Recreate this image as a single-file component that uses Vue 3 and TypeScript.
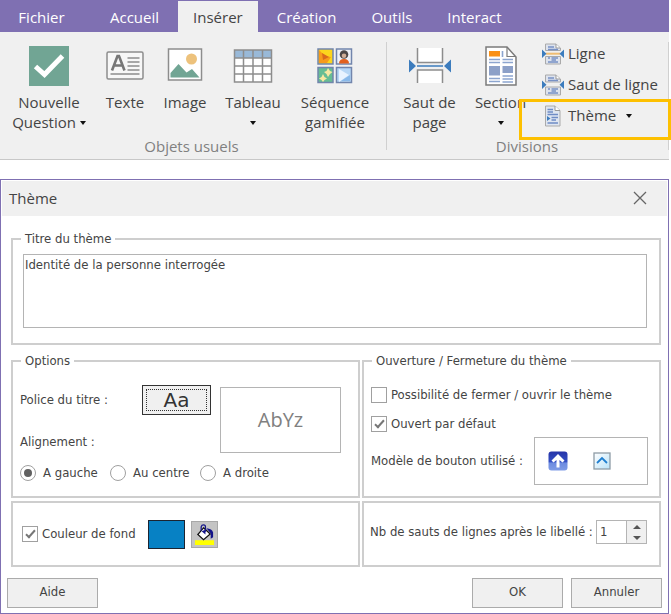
<script setup lang="ts">
import { ref } from 'vue'

type Align = 'left' | 'center' | 'right'

const tabs: string[] = ['Fichier', 'Accueil', 'Insérer', 'Création', 'Outils', 'Interact']
const activeTab = ref<string>('Insérer')

const alignments: { value: Align; label: string }[] = [
  { value: 'left', label: 'A gauche' },
  { value: 'center', label: 'Au centre' },
  { value: 'right', label: 'A droite' },
]

const title = ref<string>('Identité de la personne interrogée')
const align = ref<Align>('left')
const closable = ref<boolean>(false)
const openByDefault = ref<boolean>(true)
const useBackground = ref<boolean>(true)
const lineBreaks = ref<number>(1)

function step(delta: number): void {
  lineBreaks.value = Math.max(0, Number(lineBreaks.value) + delta)
}
</script>

<template>
  <div class="page">
    <header class="ribbon">
      <nav class="tabs">
        <button
          v-for="tab in tabs"
          :key="tab"
          type="button"
          class="tab"
          :class="{ active: tab === activeTab }"
          @click="activeTab = tab"
        >{{ tab }}</button>
      </nav>

      <div class="groups">
        <section class="group objects">
          <div class="tools">
            <button type="button" class="tool">
              <svg class="tool-icon" width="40" height="40" viewBox="0 0 40 40">
                <rect x="0" y="0" width="40" height="40" fill="#71a594" />
                <path d="M6.500 20.500L15.500 28.500L33.500 10" fill="none" stroke="#fff" stroke-width="5" />
              </svg>
              <span>Nouvelle</span>
              <span>Question <i class="caret"></i></span>
            </button>
            <button type="button" class="tool">
              <svg class="tool-icon" width="38" height="40" viewBox="0 0 38 40">
                <rect x="1" y="6" width="36" height="27" rx="1.500" fill="#f7f7f7" stroke="#8d8d8d" stroke-width="1.500" />
                <path d="M6 24.500L11.500 10H13L18.500 24.500M8 19.500H16.500" fill="none" stroke="#777" stroke-width="2.600" />
                <path d="M21.500 12H33.500M21.500 16H33.500M21.500 20H33.500M21.500 24H33.500M4.500 28H33.500" stroke="#8d8d8d" stroke-width="1.500" />
              </svg>
              <span>Texte</span>
            </button>
            <button type="button" class="tool">
              <svg class="tool-icon" width="36" height="40" viewBox="0 0 36 40">
                <rect x="1.500" y="3" width="33" height="31" fill="#fff" stroke="#8d8d8d" stroke-width="1.500" />
                <circle cx="24.500" cy="13" r="5.500" fill="#edc27c" />
                <path d="M3.500 31.500V27L11.500 18L19.500 26.500L25 23L32.500 31.500Z" fill="#71a594" />
              </svg>
              <span>Image</span>
            </button>
            <button type="button" class="tool">
              <svg class="tool-icon" width="40" height="40" viewBox="0 0 40 40">
                <rect x="1.500" y="4" width="37" height="32" fill="#fff" />
                <rect x="1.500" y="4" width="37" height="8" fill="#99b9d8" />
                <path d="M1.500 4H38.500V36H1.500ZM1.500 12H38.500M1.500 20H38.500M1.500 28H38.500M10.500 4V36M20 4V36M29.500 4V36" fill="none" stroke="#8d8d8d" stroke-width="1.500" />
              </svg>
              <span>Tableau</span>
              <span><i class="caret"></i></span>
            </button>
            <button type="button" class="tool">
              <svg class="tool-icon" width="36" height="40" viewBox="0 0 36 40">
                <rect x="1" y="3" width="15" height="15" fill="#fcd51d" stroke="#7285ac" stroke-width="1.500" />
                <path d="M2 4L8 10L14 11L10 17H2Z" fill="#f79a1c" />
                <path d="M5 7L12 11L6 14Z" fill="#d9691c" />
                <rect x="19.500" y="3" width="15" height="15" fill="#eef2f8" stroke="#7285ac" stroke-width="1.500" />
                <path d="M22 17.500Q22 13 27 13Q32 13 32 17.500Z" fill="#e2601c" />
                <circle cx="27" cy="8.500" r="4.300" fill="#4b4747" />
                <circle cx="27" cy="9.800" r="2.300" fill="#cfae98" />
                <rect x="1" y="21.500" width="15" height="15" fill="#67bd94" stroke="#7285ac" stroke-width="1.500" />
                <path d="M11 22L13 25L15.500 26L13 28L11 31L9.500 28L7 26L9.500 25ZM6 28L7.500 31L10 32.500L7.500 34L6 36L4.500 34L2 32.500L4.500 31Z" fill="#f8e8a2" />
                <rect x="19.500" y="21.500" width="15" height="15" fill="#b7d7f6" stroke="#7285ac" stroke-width="1.500" />
                <path d="M22 23L32 29L22 36Z" fill="#e8f3ff" />
                <path d="M24 35L33 29V35Z" fill="#89b9ea" />
              </svg>
              <span>Séquence</span>
              <span>gamifiée</span>
            </button>
          </div>
          <h2 class="group-name">Objets usuels</h2>
        </section>

        <section class="group divisions">
          <div class="tools">
            <button type="button" class="tool">
              <svg class="tool-icon" width="42" height="40" viewBox="0 0 42 40">
                <path d="M8.500 2V16.500H33.500V2M8.500 37V24H33.500V37" fill="#fff" stroke="#8d8d8d" stroke-width="1.500" />
                <path d="M8 20H34" stroke="#3c7cbd" stroke-width="1.500" />
                <path d="M0 13.500L7 20L0 26.500ZM42 13.500L35 20L42 26.500Z" fill="#3c7cbd" />
              </svg>
              <span>Saut de</span>
              <span>page</span>
            </button>
            <button type="button" class="tool">
              <svg class="tool-icon" width="32" height="40" viewBox="0 0 32 40">
                <path d="M1 1H22L31 11V39H1Z" fill="#fff" stroke="#7b7b7b" stroke-width="1.500" />
                <path d="M22 1V10.500H31" fill="none" stroke="#7b7b7b" stroke-width="1.200" />
                <rect x="4" y="5" width="11" height="5.500" fill="#fa9016" />
                <path d="M17.500 5V11M4 13.500H15M4 16.500H15M17.500 13.500H28M17.500 16.500H28M4 32.500H15M4 35.500H15M17.500 30H28M17.500 33H28M17.500 36H28" stroke="#8ca5cf" stroke-width="1.600" />
                <path d="M4 20H15V29.500H4ZM17.500 20H28V27H17.500Z" fill="#8ca0c8" />
              </svg>
              <span>Section</span>
              <span><i class="caret"></i></span>
            </button>
            <ul class="rows">
              <li>
                <button type="button" class="row-tool">
                  <svg width="22" height="22" viewBox="0 0 22 22">
                    <path d="M3.500 7.500V1H14L18.500 5V7.500ZM3.500 13.500V21H18.500V13.500Z" fill="#dde3ee" stroke="#aaa" stroke-width="1" />
                    <path d="M14 1V5H18" fill="#fff" stroke="#999" />
                    <path d="M6 4H12M6 6.500H16M6 15H8M9.500 15H16M9.500 17H14M6 19H16" stroke="#7791c5" stroke-width="1.500" />
                    <path d="M4 10.700H18" stroke="#f0bd72" stroke-width="2" />
                    <path d="M0 6.500L4.500 10.700L0 15ZM22 6.500L17.500 10.700L22 15Z" fill="#3c7cbd" />
                  </svg>
                  <span>Ligne</span>
                </button>
              </li>
              <li>
                <button type="button" class="row-tool">
                  <svg width="22" height="22" viewBox="0 0 22 22">
                    <path d="M3.500 8V1H14L18.500 5V8ZM3.500 13V21H18.500V13Z" fill="#dde3ee" stroke="#aaa" stroke-width="1" />
                    <path d="M14 1V5H18" fill="#fff" stroke="#999" />
                    <path d="M6 4H12M6 6.500H16M6 15H8M9.500 15H16M9.500 17H14M6 19H16" stroke="#7791c5" stroke-width="1.500" />
                    <path d="M0 6.500L4.500 10.700L0 15ZM22 6.500L17.500 10.700L22 15Z" fill="#3c7cbd" />
                  </svg>
                  <span>Saut de ligne</span>
                </button>
              </li>
              <li class="marked">
                <button type="button" class="row-tool">
                  <svg width="22" height="22" viewBox="0 0 22 22">
                    <path d="M3.500 1H13L18 5.500V21H3.500Z" fill="#dfe6f1" stroke="#aaa" stroke-width="1" />
                    <path d="M13 1V5.500H18" fill="#fff" stroke="#999" />
                    <path d="M5.500 4.500H11M5.500 7H11M5.500 9.500H16M9.500 12.500H16M9.500 15H14M5.500 18H16" stroke="#6f8cc5" stroke-width="1.500" />
                    <path d="M5 11L8.500 13.500L5 16Z" fill="#3c7cbd" />
                  </svg>
                  <span>Thème</span>
                  <i class="caret spaced"></i>
                </button>
                <span class="marker"></span>
              </li>
            </ul>
          </div>
          <h2 class="group-name">Divisions</h2>
        </section>
      </div>
    </header>

    <form class="dialog" @submit.prevent>
      <div class="titlebar">
        <h1>Thème</h1>
        <button type="button" class="close" aria-label="Fermer">
          <svg width="14" height="14" viewBox="0 0 14 14">
            <path d="M1 1L13 13M13 1L1 13" stroke="#666" stroke-width="1.300" />
          </svg>
        </button>
      </div>

      <div class="panels">
        <fieldset class="panel title-panel">
          <legend><label for="theme-title">Titre du thème</label></legend>
          <textarea id="theme-title" v-model="title" spellcheck="false"></textarea>
        </fieldset>

        <fieldset class="panel options">
          <legend>Options</legend>
          <div class="font-row">
            <div class="font-fields">
              <div class="font-field">
                <label for="font-button">Police du titre :</label>
                <button id="font-button" type="button" class="font-button"><span>Aa</span></button>
              </div>
              <span id="align-label">Alignement :</span>
            </div>
            <div class="preview">AbYz</div>
          </div>
          <div class="radios" role="radiogroup" aria-labelledby="align-label">
            <label v-for="a in alignments" :key="a.value" class="radio">
              <input v-model="align" type="radio" name="align" :value="a.value" />
              <span>{{ a.label }}</span>
            </label>
          </div>
        </fieldset>

        <fieldset class="panel opening">
          <legend>Ouverture / Fermeture du thème</legend>
          <label class="check">
            <input v-model="closable" type="checkbox" />
            <span>Possibilité de fermer / ouvrir le thème</span>
          </label>
          <label class="check">
            <input v-model="openByDefault" type="checkbox" />
            <span>Ouvert par défaut</span>
          </label>
          <div class="model">
            <span>Modèle de bouton utilisé :</span>
            <div class="model-box">
              <button type="button" class="glyph" aria-label="Flèche">
                <svg width="20" height="20" viewBox="0 0 20 20">
                  <defs>
                    <linearGradient id="arrow-fill" x1="0" y1="0" x2="0" y2="1">
                      <stop offset="0" stop-color="#2634a8" />
                      <stop offset="0.550" stop-color="#3350c4" />
                      <stop offset="0.600" stop-color="#6d8be0" />
                      <stop offset="1" stop-color="#7f9ce6" />
                    </linearGradient>
                  </defs>
                  <rect x="0.500" y="0.500" width="19" height="19" rx="3" fill="url(#arrow-fill)" />
                  <path d="M10 3L16.500 9.500L14.500 11.500L11.500 9V16.500H8.500V9L5.500 11.500L3.500 9.500Z" fill="#fff" />
                </svg>
              </button>
              <button type="button" class="glyph" aria-label="Chevron">
                <svg width="18" height="18" viewBox="0 0 18 18">
                  <defs>
                    <linearGradient id="chevron-fill" x1="0" y1="0" x2="1" y2="1">
                      <stop offset="0" stop-color="#ffffff" />
                      <stop offset="1" stop-color="#b9e2f8" />
                    </linearGradient>
                  </defs>
                  <rect x="1" y="1" width="16" height="16" fill="url(#chevron-fill)" stroke="#8e9ca6" stroke-width="1.300" />
                  <path d="M4 11L9 6L14 11" fill="none" stroke="#1f7fd0" stroke-width="1.800" />
                </svg>
              </button>
            </div>
          </div>
        </fieldset>

        <div class="panel background">
          <label class="check">
            <input v-model="useBackground" type="checkbox" />
            <span>Couleur de fond</span>
          </label>
          <button type="button" class="swatch" aria-label="Couleur"></button>
          <button type="button" class="bucket" aria-label="Choisir la couleur">
            <svg width="21" height="21" viewBox="0 0 22 22">
              <rect x="1" y="17" width="20" height="5" fill="#ffff00" />
              <path d="M10 4L17 10.500L10 16.500L4 11Z" fill="#fff" stroke="#111" stroke-width="1.300" />
              <path d="M7.500 7V3Q8 1 10 1Q12 1 12 3V8" fill="none" stroke="#12128a" stroke-width="1.300" />
              <path d="M8 7.500L12 6V11Z" fill="#12128a" />
              <path d="M13 4.500Q19 5 20 9V14L17.500 15.500V10Z" fill="#12128a" />
            </svg>
          </button>
        </div>

        <div class="panel breaks">
          <label for="line-breaks">Nb de sauts de lignes après le libellé :</label>
          <div class="spinner">
            <input id="line-breaks" v-model="lineBreaks" type="text" inputmode="numeric" />
            <div class="steps">
              <button type="button" class="step up" aria-label="Plus" @click="step(1)"></button>
              <button type="button" class="step down" aria-label="Moins" @click="step(-1)"></button>
            </div>
          </div>
        </div>
      </div>

      <footer class="footer">
        <button type="button" class="push help">Aide</button>
        <button type="submit" class="push">OK</button>
        <button type="button" class="push">Annuler</button>
      </footer>
    </form>
  </div>
</template>

<style>
body {
  background: #fff;
}
</style>

<style scoped>
.page {
  display: flex;
  flex-direction: column;
  gap: 19px;
  padding-right: 2px;
  font-family: "DejaVu Sans Condensed", "DejaVu Sans", sans-serif;
  font-size: 13px;
  line-height: 16px;
  color: #444;
}
.page *,
.page *::before,
.page *::after {
  box-sizing: border-box;
}
button,
input,
textarea {
  margin: 0;
  padding: 0;
  border: 0;
  border-radius: 0;
  background: none;
  font: inherit;
  color: inherit;
}
svg {
  display: block;
  flex: none;
}
h1,
h2 {
  margin: 0;
  font-weight: 400;
}

/* Ribbon */
.ribbon {
  background: #f0f0f0;
  border-bottom: 1px solid #c8c8c8;
  font-family: "Open Sans", "Noto Sans", sans-serif;
  font-size: 15px;
  line-height: 20px;
}
.tabs {
  display: flex;
  gap: 3px;
  height: 32px;
  padding-top: 1px;
  background: #7f70b2;
}
.tab {
  padding: 0 16px;
  color: #fff;
}
.tab:first-child {
  width: 91px;
  padding: 0 8px 0 0;
}
.tab.active {
  padding: 0 15px;
  background: #f0f0f0;
  color: #444;
}
.groups {
  display: flex;
  padding-top: 10px;
}
.group {
  display: flex;
  flex-direction: column;
  height: 108px;
  margin-bottom: 9px;
  border-right: 1px solid #d0d0d0;
}
.objects {
  width: 387px;
  padding-left: 5px;
}
.divisions {
  flex: 1;
  padding-left: 7px;
}
.tools {
  display: flex;
  flex: none;
  height: 94px;
}
.tool {
  display: flex;
  flex-direction: column;
  align-items: center;
  padding-top: 4px;
  white-space: nowrap;
}
.tool-icon {
  margin-bottom: 6px;
}
.objects .tool:nth-child(1) { width: 88px; }
.objects .tool:nth-child(2) { width: 64px; }
.objects .tool:nth-child(3) { width: 56px; }
.objects .tool:nth-child(4) { width: 80px; }
.objects .tool:nth-child(5) { width: 84px; }
.divisions .tool { width: 71px; }
.caret {
  display: inline-block;
  vertical-align: 3px;
  border: 3px solid transparent;
  border-top: 4px solid #111;
  border-bottom: 0;
}
.caret.spaced {
  margin-left: 6px;
}
.rows {
  flex: 1;
  margin: -4px 0 0 6px;
  padding: 0;
  list-style: none;
}
.rows li {
  position: relative;
  height: 31px;
}
.row-tool {
  display: flex;
  align-items: center;
  gap: 4px;
  height: 31px;
  white-space: nowrap;
}
.row-tool span {
  padding-bottom: 1px;
}
.marker {
  position: absolute;
  inset: -1px -3px -9px -23px;
  border: 3px solid #fdc000;
  pointer-events: none;
}
.group-name {
  padding: 0 12px 0 4px;
  font-size: 15px;
  line-height: 20px;
  text-align: center;
  color: #808080;
}

/* Dialog */
.dialog {
  padding: 1px;
  border: 1px solid #7f70b2;
  background: #fff;
}
.titlebar {
  display: flex;
  align-items: center;
  justify-content: space-between;
  height: 35px;
  padding: 0 20px 2px 7px;
  background: #f0f0f0;
}
.titlebar h1 {
  font-family: "Open Sans", "Noto Sans", sans-serif;
  font-size: 15px;
  line-height: 20px;
}
.panels {
  display: grid;
  grid-template-columns: 349fr 299fr;
  column-gap: 2px;
  padding: 15px 6px 0 9px;
}
.panel {
  min-width: 0;
  margin: 0;
  padding: 0 11px 0 7px;
  border: 2px solid #cecece;
}
.panel legend {
  margin-left: 1px;
  padding: 0 4px;
  line-height: 16px;
}
.title-panel {
  grid-column: 1 / -1;
  margin-bottom: 8px;
  padding: 7px 12px 15px 10px;
}
.title-panel legend {
  margin-left: -2px;
}
textarea {
  display: block;
  width: 100%;
  height: 74px;
  padding: 2px 1px;
  border: 1px solid #b4b4b4;
  resize: none;
}
.options {
  padding: 16px 17px 14px 7px;
}
.font-row {
  display: flex;
  gap: 9px;
}
.font-fields {
  display: flex;
  flex-direction: column;
  gap: 19px;
  width: 191px;
}
.font-field {
  display: flex;
  align-items: center;
  justify-content: space-between;
}
.font-button {
  width: 69px;
  height: 30px;
  padding: 3px;
  border: 1px solid #333;
  background: #f0f0f0;
}
.font-button span {
  display: block;
  border: 1px dotted #333;
  font-family: "DejaVu Sans", sans-serif;
  font-size: 20px;
  line-height: 20px;
  color: #333;
}
.preview {
  display: flex;
  flex: 0 1 121px;
  align-items: center;
  justify-content: center;
  height: 66px;
  margin-top: 2px;
  border: 1px solid #b4b4b4;
  font-family: "Open Sans", "Noto Sans", sans-serif;
  font-size: 20px;
  line-height: 28px;
  color: #808080;
}
.radios {
  display: flex;
  margin-top: 12px;
}
.radio,
.check {
  display: flex;
  align-items: center;
  white-space: nowrap;
}
.radio {
  gap: 7px;
  min-width: 90px;
}
.check {
  gap: 4px;
  height: 16px;
}
input[type="radio"],
input[type="checkbox"] {
  flex: none;
  width: 16px;
  height: 16px;
  border: 1px solid #a0a0a0;
  background: #fff;
  appearance: none;
}
input[type="radio"] {
  border-radius: 50%;
}
input[type="radio"]:checked::before {
  content: "";
  display: block;
  width: 8px;
  height: 8px;
  margin: 3px;
  border-radius: 50%;
  background: #606060;
}
input[type="checkbox"]:checked::before {
  content: "";
  display: block;
  width: 5px;
  height: 10px;
  margin: 1px 5px;
  border: solid #777;
  border-width: 0 2px 2px 0;
  transform: rotate(42deg);
}
.opening {
  padding: 18px 11px 11px 7px;
}
.opening .check {
  margin-bottom: 13px;
}
.model {
  display: flex;
  align-items: center;
  justify-content: space-between;
  white-space: nowrap;
  margin-top: -8px;
}
.model-box {
  display: flex;
  align-items: center;
  gap: 25px;
  width: 114px;
  height: 48px;
  padding-left: 13px;
  border: 1px solid #b4b4b4;
}
.background,
.breaks {
  display: flex;
  align-items: center;
  height: 66px;
  margin-top: 3px;
}
.background {
  padding-left: 9px;
}
.swatch {
  width: 37px;
  height: 29px;
  margin: 0 6px 0 12px;
  border: 1px solid #1c2430;
  background: #0781c4;
}
.bucket {
  width: 27px;
  height: 27px;
  padding: 2px;
  border: 1px solid #a8a8a8;
  background: #c4c4c4;
}
.breaks {
  justify-content: space-between;
  padding: 0 12px 4px 6px;
  white-space: nowrap;
}
.spinner {
  display: flex;
  width: 51px;
  height: 24px;
  border: 1px solid #b4b4b4;
}
.spinner input {
  width: 29px;
  padding-left: 3px;
}
.steps {
  display: flex;
  flex: 1;
  flex-direction: column;
  border-left: 1px solid #b4b4b4;
  background: #f0f0f0;
}
.step {
  display: flex;
  flex: 1;
  align-items: center;
  justify-content: center;
}
.step::before {
  content: "";
  border: 4px solid transparent;
}
.step.up::before {
  border-top: 0;
  border-bottom-color: #555;
}
.step.down::before {
  border-bottom: 0;
  border-top-color: #555;
}
.footer {
  display: flex;
  gap: 8px;
  padding: 11px 5px 4px;
}
.push {
  width: 91px;
  height: 30px;
  padding-bottom: 2px;
  border: 1px solid #ababab;
  background: #f0f0f0;
}
.help {
  margin-right: auto;
}
</style>
